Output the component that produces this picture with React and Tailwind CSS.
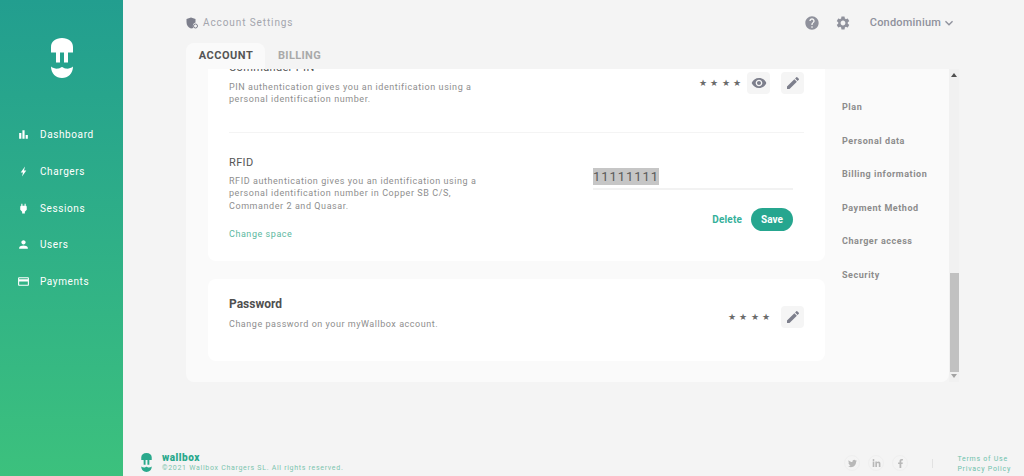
import React from "react";
import { MdBarChart, MdPower, MdPerson, MdCreditCard, MdHelp, MdSettings, MdVisibility, MdEdit, MdKeyboardArrowDown } from "react-icons/md";
import { FaTwitter, FaLinkedinIn, FaFacebookF } from "react-icons/fa";

const Logo = ({ className, fill }) => (
  <svg viewBox="0 0 22 40" className={className} fill={fill}>
    <path d="M0 9C0 3.500 4.500 0 11 0s11 3.500 11 9v5.500h-5v10h-4v-10H9v10H5v-10H0Z" />
    <path d="M0 28.500c2 1.700 5 2.500 7.500 2 1.500-.3 2.500-1.500 3.500-1.500s2 1.200 3.500 1.500c2.500.5 5.500-.3 7.500-2C22 35.500 17 40 11 40S0 35.500 0 28.500Z" />
  </svg>
);

const Bolt = ({ className }) => (
  <svg viewBox="0 0 13 13" className={className} fill="currentColor">
    <path d="M8 1.500 3.700 7.400h2.300L5 11.500 9.300 5.600H7Z" />
  </svg>
);

const Nav = ({ icon: Icon, label }) => (
  <div className="flex items-center h-[36.600px] pl-[17px] text-white">
    <Icon className="w-[13px] h-[13px] mr-[10px]" />
    <span className="text-[10px] tracking-[0.6px]">{label}</span>
  </div>
);

const IconBtn = ({ icon: Icon }) => (
  <div className="w-[23px] h-[22px] rounded bg-[#f5f5f5] flex items-center justify-center text-[#7d7f8c]">
    <Icon className="w-[16px] h-[16px]" />
  </div>
);

const Stars = () => <span className="text-[9px] text-[#6a6a6a] tracking-[3.200px] leading-none">★★★★</span>;

const SideLink = ({ children }) => (
  <div className="h-[33.600px] flex items-center text-[9px] font-bold tracking-[0.55px] text-[#8c8c8c]">{children}</div>
);

const Desc = ({ children, className = "" }) => (
  <p className={`text-[9px] leading-[12.300px] tracking-[0.57px] text-[#8e8e8e] ${className}`}>{children}</p>
);

const Social = ({ icon: Icon, className = "" }) => (
  <span className={`w-[16px] h-[16px] rounded-full border border-[#efefef] flex items-center justify-center ${className}`}>
    <Icon className="w-[9px] h-[9px]" />
  </span>
);

export default function App() {
  return (
    <div className="flex h-[476px] w-[1024px] overflow-hidden bg-[#f4f4f4] font-['Roboto',sans-serif]">
      <aside className="w-[123px] shrink-0 h-full bg-gradient-to-b from-[#229e8f] to-[#3cc17d]">
        <div className="flex justify-center pt-[38px]">
          <Logo className="w-[22px] h-[40px]" fill="#ffffff" />
        </div>
        <nav className="mt-[38.600px]">
          <Nav icon={MdBarChart} label="Dashboard" />
          <Nav icon={Bolt} label="Chargers" />
          <Nav icon={MdPower} label="Sessions" />
          <Nav icon={MdPerson} label="Users" />
          <Nav icon={MdCreditCard} label="Payments" />
        </nav>
      </aside>

      <main className="flex-1 flex flex-col min-w-0">
        <header className="h-[43px] flex items-center pl-[63px] pt-[2px]">
          <svg viewBox="0 0 12 12" className="w-[12px] h-[12px] mr-[5px]">
            <path d="M5 .5 9.500 2v3.500a3.500 3.500 0 0 0-2 5.500L5 11.500C2 10.500.5 8 .5 5V2Z" fill="#7d7f8c" />
            <circle cx="9.500" cy="9" r="2" fill="none" stroke="#7d7f8c" strokeWidth="1" />
          </svg>
          <span className="text-[10px] tracking-[0.9px] text-[#a3a5ad]">Account Settings</span>
          <div className="ml-auto flex items-center pr-[67px] text-[#8f919c]">
            <MdHelp className="w-[16px] h-[16px]" />
            <MdSettings className="w-[16px] h-[16px] ml-[15px]" />
            <span className="ml-[19px] mt-[1px] text-[11px] font-medium tracking-[0.2px]">Condominium</span>
            <MdKeyboardArrowDown className="w-[16px] h-[16px]" />
          </div>
        </header>

        <div className="ml-[63px] flex h-[26px]">
          <div className="w-[79px] h-full pl-[1px] rounded-t-lg bg-[#fafafa] flex items-center justify-center text-[11px] font-bold tracking-[0.5px] text-[#555555]">ACCOUNT</div>
          <div className="pl-[13px] flex items-center text-[11px] font-bold tracking-[0.35px] text-[#a9a9a9]">BILLING</div>
        </div>

        <div className="ml-[63px] flex h-[313px]">
          <section className="w-[763px] h-full bg-[#fafafa] rounded-b-lg flex overflow-hidden">
            <div className="w-[639px] h-full shrink-0 pl-[22px]">
              <div className="w-[617px] h-[192px] bg-white rounded-b-lg px-[21px] overflow-hidden">
                <div className="flex h-[64px] -mt-[8px] items-start justify-between">
                  <div>
                    <h3 className="text-[11px] leading-[14px] tracking-[0.35px] text-[#555555]">Commander PIN</h3>
                    <Desc className="mt-[6px] w-[250px]">PIN authentication gives you an identification using a personal identification number.</Desc>
                  </div>
                  <div className="flex items-center pt-[11px]">
                    <Stars />
                    <div className="ml-[3px]"><IconBtn icon={MdVisibility} /></div>
                    <div className="ml-[11px]"><IconBtn icon={MdEdit} /></div>
                  </div>
                </div>
                <div className="border-t border-[#f4f4f4] mt-[7px] pt-[23px] h-[129px] flex justify-between">
                  <div>
                    <h3 className="text-[11px] leading-[14px] tracking-[0.35px] text-[#555555]">RFID</h3>
                    <Desc className="mt-[5px] w-[250px]">RFID authentication gives you an identification using a personal identification number in Copper SB C/S, Commander 2 and Quasar.</Desc>
                    <div className="mt-[16px] text-[9px] tracking-[0.55px] text-[#5cb8a0]">Change space</div>
                  </div>
                  <div className="w-[200px] mr-[11px] pt-[12px]">
                    <div className="border-b-2 border-[#f2f2f2] pb-[3px] leading-none">
                      <span className="bg-[#c6c6c6] text-[13px] tracking-[0.95px] text-[#5a5a5a] leading-[17px] inline-block">11111111</span>
                    </div>
                    <div className="flex items-center justify-end mt-[18px]">
                      <span className="text-[10px] font-bold tracking-[0.15px] text-[#35b09a] mr-[9px]">Delete</span>
                      <span className="w-[42px] h-[23px] rounded-full bg-[#26a68f] text-white text-[10px] font-bold flex items-center justify-center">Save</span>
                    </div>
                  </div>
                </div>
              </div>
              <div className="w-[617px] h-[82px] mt-[18px] bg-white rounded-lg px-[21px] flex justify-between">
                <div className="pt-[18px]">
                  <h3 className="text-[12px] leading-[15px] font-bold text-[#4f4f4f]">Password</h3>
                  <p className="mt-[6px] text-[9px] leading-[12px] tracking-[0.53px] text-[#8e8e8e]">Change password on your myWallbox account.</p>
                </div>
                <div className="flex items-center self-start mt-[27px]">
                  <Stars />
                  <div className="ml-[8px]"><IconBtn icon={MdEdit} /></div>
                </div>
              </div>
            </div>
            <div className="flex-1 pl-[17px] pt-[22px]">
              <SideLink>Plan</SideLink>
              <SideLink>Personal data</SideLink>
              <SideLink>Billing information</SideLink>
              <SideLink>Payment Method</SideLink>
              <SideLink>Charger access</SideLink>
              <SideLink>Security</SideLink>
            </div>
          </section>
          <div className="w-[10px] h-full bg-[#f1f1f1] flex flex-col items-center">
            <svg viewBox="0 0 8 8" className="w-[8px] h-[8px] mt-[2px]"><path d="M4 2 7 6H1Z" fill="#505050" /></svg>
            <div className="w-[9px] h-[99px] bg-[#c1c1c1] mt-[194px]" />
            <svg viewBox="0 0 8 8" className="w-[8px] h-[8px]"><path d="M1 2H7L4 6Z" fill="#a3a3a3" /></svg>
          </div>
        </div>

        <footer className="flex-1 flex items-end pb-[3px] pl-[18px]">
          <Logo className="w-[11px] h-[19px] mb-[1px]" fill="#2aa98c" />
          <div className="ml-[10px]">
            <div className="text-[10px] leading-[11px] font-black tracking-[0.5px] text-[#2aa98c]">wallbox</div>
            <div className="text-[7px] leading-[10px] tracking-[0.7px] text-[#7cc4ae]">©2021 Wallbox Chargers SL. All rights reserved.</div>
          </div>
          <div className="ml-auto flex items-center mr-[13px] self-end -mb-[1px] text-[#b8b8b8]">
            <div className="flex items-center mb-[2px]">
              <Social icon={FaTwitter} />
              <Social icon={FaLinkedinIn} className="ml-[8px]" />
              <Social icon={FaFacebookF} className="ml-[8px]" />
              <span className="ml-[24px] h-[9px] w-px bg-[#e2e2e2]" />
            </div>
            <div className="ml-[24px] text-[7px] leading-[10px] tracking-[0.75px] text-[#6fc2ac]">
              <div>Terms of Use</div>
              <div>Privacy Policy</div>
            </div>
          </div>
        </footer>
      </main>
    </div>
  );
}
